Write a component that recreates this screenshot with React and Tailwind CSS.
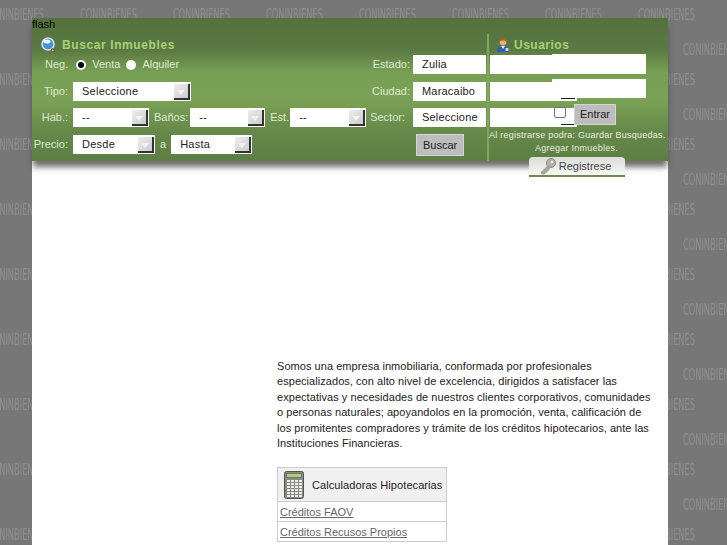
const SearchIcon = () => (
  <svg width="16" height="16" viewBox="0 0 16 16" className="shrink-0">
    <circle cx="7" cy="7" r="6" fill="#4a90d8" stroke="#d8e8f8" strokeWidth="1.5" />
    <ellipse cx="6" cy="4.5" rx="3.5" ry="2" fill="#eaf4ff" />
    <path d="M11 11l3 3.5h-4z" fill="#d8b040" stroke="#5a4a20" strokeWidth="0.6" />
  </svg>
);

const UserIcon = () => (
  <svg width="14" height="16" viewBox="0 0 14 16" className="shrink-0">
    <path d="M1 15c0-4 2-6 6-6s6 2 6 6z" fill="#2f5fb0" />
    <path d="M5 9l2 3 2-3z" fill="#eef2fa" />
    <circle cx="7" cy="5" r="3.4" fill="#e8b078" />
    <path d="M3.5 4.5C3.5 1.5 5 1 7 1s3.5.5 3.5 3.5C9 3 5 3 3.5 4.5z" fill="#a8601f" />
    <path d="M9.5 11h3v3h-3z" fill="#c8d8ee" />
  </svg>
);

const KeyIcon = () => (
  <svg width="18" height="18" viewBox="0 0 18 18" className="shrink-0">
    <circle cx="12" cy="6" r="4.5" fill="#b4b4ac" stroke="#8a8a84" />
    <circle cx="13" cy="5" r="1.2" fill="#efefe8" />
    <path d="M9 8.5L2.5 15v2h3l1-1.500 1 0 0-1.500 1.500 0 2-3.500z" fill="#a8a8a0" stroke="#8a8a84" strokeWidth="0.6" />
  </svg>
);

const CalculatorIcon = () => (
  <svg width="20" height="28" viewBox="0 0 20 28" className="shrink-0">
    <rect x="0.5" y="0.5" width="19" height="27" rx="2" fill="#8a8a84" stroke="#55554f" />
    <rect x="2.5" y="2.5" width="15" height="4" fill="#a8d080" stroke="#44503a" strokeWidth="0.5" />
    {[9, 12, 15, 18, 21, 24].map((y) =>
      [3, 7, 11, 15].map((x) => <rect key={`${x}-${y}`} x={x} y={y} width="3" height="2" fill="#eeeeea" />)
    )}
  </svg>
);

const Select = ({ value, width }) => (
  <div className={`flex h-[19px] items-center justify-between bg-white pl-[9px] pr-[1px] text-[11px] tracking-[0.25px] text-[#222] ${width}`}>
    <span>{value}</span>
    <span className="flex h-[16px] w-[16px] items-center justify-center border-r-2 border-b-2 border-[#333] bg-gradient-to-br from-[#eeeeee] to-[#cccccc]">
      <span className="mt-[3px] h-0 w-0 border-x-[4px] border-t-[5px] border-x-transparent border-t-[#f2f2f2]" />
    </span>
  </div>
);

const TextBox = ({ value }) => (
  <div className="flex h-[19px] w-[73px] items-center bg-white pl-[9px] text-[11px] tracking-[0.2px] text-[#222]">{value}</div>
);

const Radio = ({ checked }) => (
  <span className="flex h-[10px] w-[10px] items-center justify-center rounded-full bg-white">
    {checked && <span className="h-[6px] w-[6px] rounded-full bg-black" />}
  </span>
);

const Label = ({ children, className = "" }) => (
  <span className={`text-[11px] text-[#dfe9d3] ${className}`}>{children}</span>
);

const Watermark = () => (
  <svg className="absolute inset-0" width="727" height="545">
    <defs>
      <pattern id="tile" width="93" height="65" patternUnits="userSpaceOnUse" x="0" y="0">
        <text x="80" y="20" textLength="57" lengthAdjust="spacingAndGlyphs" fontFamily="DejaVu Sans" fontSize="16" fill="#8e8e8e">CONINBIENES</text>
        <text x="-13" y="20" textLength="57" lengthAdjust="spacingAndGlyphs" fontFamily="DejaVu Sans" fontSize="16" fill="#8e8e8e">CONINBIENES</text>
        <text x="32" y="55" textLength="57" lengthAdjust="spacingAndGlyphs" fontFamily="DejaVu Sans" fontSize="16" fill="#8e8e8e">CONINBIENES</text>
      </pattern>
    </defs>
    <rect width="727" height="545" fill="url(#tile)" />
  </svg>
);

const Banner = () => (
  <div className="relative flex h-[143px] bg-[linear-gradient(to_bottom,#55713e_0%,#5a7942_22%,#78a054_38%,#7aa155_58%,#668a4a_78%,#5d7e44_100%)] shadow-[0_7px_6px_-1px_rgba(60,60,60,0.75)]">
    {/* Buscador */}
    <div className="w-[455px] shrink-0">
      <div className="h-[16px] text-[11px] leading-[13px] text-black">flash</div>
      <div className="flex h-[21px] items-center pl-[9px]">
        <SearchIcon />
        <span className="ml-[5px] text-[12px] font-bold tracking-[0.6px] text-[#a6d274]">Buscar Inmuebles</span>
      </div>

      <div className="flex h-[19px] items-center pl-[13px]">
        <Label className="mr-[8px]">Neg.</Label>
        <Radio checked />
        <Label className="ml-[6px] mr-[6px]">Venta</Label>
        <Radio />
        <Label className="ml-[6px]">Alquiler</Label>
        <Label className="ml-auto mr-[3px]">Estado:</Label>
        <TextBox value="Zulia" />
        <span className="w-[1px]" />
      </div>

      <div className="mt-[8px] flex h-[19px] items-center">
        <Label className="w-[36px] text-right">Tipo:</Label>
        <div className="ml-[5px]"><Select value="Seleccione" width="w-[118px]" /></div>
        <Label className="ml-auto mr-[3px]">Ciudad:</Label>
        <TextBox value="Maracaibo" />
        <span className="w-[1px]" />
      </div>

      <div className="mt-[7px] flex h-[19px] items-center">
        <Label className="w-[36px] text-right">Hab.:</Label>
        <div className="ml-[5px]"><Select value="--" width="w-[76px]" /></div>
        <Label className="ml-[5px] mr-[2px]">Baños:</Label>
        <Select value="--" width="w-[75px]" />
        <Label className="ml-[5px] mr-[1px]">Est.</Label>
        <Select value="--" width="w-[76px]" />
        <Label className="ml-auto mr-[8px]">Sector:</Label>
        <TextBox value="Seleccione" />
        <span className="w-[1px]" />
      </div>

      <div className="mt-[8px] flex h-[19px] items-center">
        <Label className="w-[36px] text-right">Precio:</Label>
        <div className="ml-[5px]"><Select value="Desde" width="w-[82px]" /></div>
        <Label className="mx-[5px]">a</Label>
        <Select value="Hasta" width="w-[81px]" />
        <button className="ml-[164px] mt-[1px] h-[22px] w-[48px] border border-[#d4d4d4] bg-[#bdbdbd] text-[11px] text-[#222]">Buscar</button>
      </div>
    </div>

    {/* Usuarios */}
    <div className="mt-[16px] w-[2px] shrink-0 bg-[#7fa85a]" />
    <div className="relative flex-1 pt-[16px]">
      <div className="flex h-[21px] items-center pl-[7px]">
        <UserIcon />
        <span className="ml-[4px] text-[12px] font-bold tracking-[0.5px] text-[#a6d274]">Usuarios</span>
      </div>
      <div className="ml-[1px] h-[19px] w-[87px] bg-white" />
      <div className="ml-[1px] mt-[8px] h-[19px] w-[87px] bg-white" />
      <div className="ml-[1px] mt-[7px] h-[19px] w-[87px] bg-white" />
      <div className="mt-[2px] w-[175px] text-center text-[9px] leading-[13px] tracking-[0.25px] text-[#e6eedc]">
        <div className="whitespace-nowrap">Al registrarse podra: Guardar Busquedas.</div>
        <div>Agregar Inmuebles.</div>
      </div>

      {/* campos superpuestos */}
      <div className="absolute left-[63px] top-[36px] h-[20px] w-[94px] bg-white" />
      <div className="absolute left-[63px] top-[61px] h-[19px] w-[94px] bg-white" />
      <div className="absolute left-[72px] top-[80px] h-[1px] w-[14px] bg-[#222]" />
      <div className="absolute left-[72px] top-[106px] h-[1px] w-[14px] bg-[#222]" />
      <div className="absolute left-[65px] top-[89px] h-[11px] w-[12px] rounded-[2px] border border-[#777] bg-white" />
      <button className="absolute left-[85px] top-[86px] h-[21px] w-[42px] border border-[#d4d4d4] bg-[#bdbdbd] text-[11px] text-[#222]">Entrar</button>
      <button className="absolute left-[40px] top-[139px] flex h-[20px] w-[96px] items-center justify-center gap-[2px] rounded-t-[4px] border-b-2 border-[#6b8a50] bg-gradient-to-b from-[#dcdcd8] to-[#f8f8f8] pr-[4px] text-[11px] text-[#444]">
        <KeyIcon />
        Registrese
      </button>
    </div>
  </div>
);

export default function App() {
  return (
    <div className="relative h-[545px] w-[727px] overflow-hidden bg-[#777777] font-['Liberation_Sans',sans-serif]">
      <Watermark />
      <div className="relative ml-[32px] h-full w-[636px] pt-[18px]">
        <div className="h-full bg-white">
          <Banner />
          <div className="ml-[245px] mt-[198px] w-[378px] text-[11px] leading-[15.4px] tracking-[0.05px] text-[#222]">
            Somos una empresa inmobiliaria, conformada por profesionales especializados, con alto nivel de excelencia, dirigidos a satisfacer las expectativas y necesidades de nuestros clientes corporativos, comunidades o personas naturales; apoyandolos en la promoción, venta, calificación de los promitentes compradores y trámite de los créditos hipotecarios, ante las Instituciones Financieras.
          </div>
          <div className="ml-[245px] mt-[16px] w-[170px] border border-[#cccccc] text-[11px]">
            <div className="flex h-[33px] items-center gap-[8px] bg-[#f0f0f0] pl-[6px] tracking-[0.08px] text-[#222]">
              <CalculatorIcon />
              <span className="whitespace-nowrap">Calculadoras Hipotecarias</span>
            </div>
            <div className="flex h-[20px] items-center border-t border-[#cccccc] pl-[2px] text-[#666] underline">Créditos FAOV</div>
            <div className="flex h-[20px] items-center border-t border-[#cccccc] pl-[2px] text-[#666] underline">Créditos Recusos Propios</div>
          </div>
        </div>
      </div>
    </div>
  );
}
